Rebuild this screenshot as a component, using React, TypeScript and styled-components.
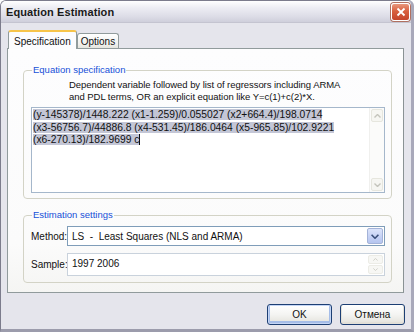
import React from "react";
import styled, { createGlobalStyle } from "styled-components";

const GlobalStyle = createGlobalStyle`
  html, body { margin: 0; padding: 0; background: #ffffff; }
  body { font-family: "Liberation Sans", Arial, sans-serif; }
  * { box-sizing: border-box; }
`;

const Window = styled.div`
  width: 414px;
  height: 332px;
  display: flex;
  flex-direction: column;
  background: #e5e5ec;
  border: 1px solid #7c7c8c;
  border-right: 3px solid #a9a9ba;
  border-bottom: 3px solid #9c9cac;
  border-radius: 6px 6px 0 0;
  overflow: hidden;
`;

const TitleBar = styled.div`
  height: 22px;
  flex: none;
  display: flex;
  align-items: center;
  justify-content: space-between;
  padding: 0 1px 0 5px;
  background: linear-gradient(180deg, #ffffff 0%, #eeeef4 30%, #dcdce6 75%, #cfcfdb 100%);
  border-bottom: 1px solid #c4c4d0;
`;

const Title = styled.span`
  font-family: "Liberation Sans", Arial, sans-serif;
  font-weight: bold;
  font-size: 11px;
  color: #1a1a1a;
  letter-spacing: 0.1px;
`;

const CloseButton = styled.div`
  width: 19px;
  height: 18px;
  border: 1px solid #ffffff;
  border-radius: 3px;
  background: linear-gradient(180deg, #e8977c 0%, #d8603f 45%, #c4442a 100%);
  box-shadow: 0 0 0 1px #b07060;
  display: flex;
  align-items: center;
  justify-content: center;
`;

const Body = styled.div`
  flex: 1;
  display: flex;
  flex-direction: column;
  padding: 7px 0 0 6px;
`;

const TabRow = styled.div`
  display: flex;
  align-items: flex-end;
  height: 18px;
  padding-left: 1px;
  position: relative;
  z-index: 1;
`;

const Tab = styled.div<{ $active?: boolean }>`
  font-size: 10px;
  color: #111;
  display: flex;
  align-items: center;
  justify-content: center;
  border: 1px solid #919b9c;
  border-bottom: none;
  border-radius: 3px 3px 0 0;
  height: ${(p) => (p.$active ? "19px" : "15px")};
  padding: ${(p) => (p.$active ? "2px 5px 0" : "0 3px")};
  margin-bottom: ${(p) => (p.$active ? "-1px" : "0")};
  background: ${(p) =>
    p.$active ? "#fcfcfe" : "linear-gradient(180deg, #ffffff 0%, #f1f1ee 70%, #e4e4de 100%)"};
  border-top: ${(p) => (p.$active ? "2px solid #f7c44a" : "1px solid #919b9c")};
`;

const Panel = styled.div`
  width: 397px;
  height: 245px;
  background: linear-gradient(180deg, #fdfdfe 0%, #fbfbfb 80%, #f5f5f3 100%);
  border: 1px solid #919b9c;
  border-right: 1px solid #8a9294;
  display: flex;
  flex-direction: column;
  padding: 15px 11px 0 15px;
  gap: 10px;
`;

const Group = styled.fieldset`
  margin: 0;
  border: 1px solid #d3d3c6;
  border-radius: 4px;
  padding: 0 6px 0 7px;
  display: flex;
  flex-direction: column;
`;

const Legend = styled.legend`
  font-size: 9.5px;
  color: #1750d8;
  padding: 0 1px;
  margin-left: 1px;
  line-height: 12px;
`;

const Description = styled.div`
  font-size: 9.5px;
  letter-spacing: -0.05px;
  color: #111;
  line-height: 12px;
  padding: 3px 0 0 38px;
`;

const EditBox = styled.div`
  margin-top: 4px;
  height: 86px;
  border: 1px solid #a5b7cb;
  background: #ffffff;
  display: flex;
`;

const EditText = styled.div`
  flex: 1;
  font-size: 10.3px;
  line-height: 12.5px;
  color: #111;
  padding: 1px 1px;
`;

const Line = styled.div``;

const Sel = styled.span`
  background: #c3c6d6;
`;

const Caret = styled.span`
  display: inline-block;
  width: 1px;
  height: 11px;
  background: #111;
  vertical-align: -2px;
`;

const ScrollBar = styled.div`
  width: 15px;
  display: flex;
  flex-direction: column;
  background: #fbfbfa;
  border-left: 1px solid #f0f0ee;
`;

const ScrollButton = styled.div`
  height: 13px;
  margin: 1px;
  border: 1px solid #e6e6de;
  border-radius: 2px;
  background: #f6f6f2;
  display: flex;
  align-items: center;
  justify-content: center;
`;

const Track = styled.div`
  flex: 1;
`;

const Spacer = styled.div`
  height: 5px;
`;

const GroupBody = styled.div`
  display: flex;
  flex-direction: column;
  gap: 7px;
  padding: 5px 0 6px;
`;

const FieldRow = styled.div`
  display: flex;
  align-items: center;
`;

const FieldLabel = styled.span`
  font-size: 10px;
  color: #111;
  width: 36px;
  flex: none;
`;

const Combo = styled.div`
  flex: 1;
  height: 20px;
  border: 1px solid #7f9db9;
  background: #ffffff;
  display: flex;
  align-items: center;
  padding: 1px;
`;

const ComboText = styled.span`
  flex: 1;
  font-size: 10px;
  color: #111;
  white-space: pre;
  padding-left: 3px;
`;

const DropButton = styled.div`
  width: 16px;
  height: 16px;
  border: 1px solid #a4b3d8;
  border-radius: 2px;
  background: linear-gradient(180deg, #dce4fa 0%, #c3d0f4 60%, #b5c5ef 100%);
  display: flex;
  align-items: center;
  justify-content: center;
`;

const SampleField = styled.div`
  flex: 1;
  height: 23px;
  border: 1px solid #c9d2dc;
  background: #ffffff;
  display: flex;
  align-items: stretch;
  padding: 1px;
`;

const SampleText = styled.span`
  flex: 1;
  font-size: 10px;
  color: #111;
  padding: 3px 0 0 3px;
`;

const Spinner = styled.div`
  width: 15px;
  display: flex;
  flex-direction: column;
  gap: 1px;
`;

const SpinButton = styled.div`
  flex: 1;
  border: 1px solid #ecece6;
  border-radius: 2px;
  background: #f7f7f4;
  display: flex;
  align-items: center;
  justify-content: center;
`;

const Footer = styled.div`
  display: flex;
  justify-content: flex-end;
  gap: 8px;
  padding: 11px 0 0 0;
  width: 398px;
`;

const Button = styled.button<{ $default?: boolean }>`
  width: 65px;
  height: 21px;
  font-family: "Liberation Sans", Arial, sans-serif;
  font-size: 10px;
  color: #111;
  border: 1px solid #1d3f74;
  border-radius: 3px;
  background: linear-gradient(180deg, #ffffff 0%, #f4f4f2 50%, #e6e5df 90%, #d8d4cb 100%);
  box-shadow: ${(p) =>
    p.$default ? "inset 0 0 0 1px #c4d5f5, inset 0 -1px 0 2px #a5bde8" : "inset 0 -1px 0 1px #e2e0d8"};
  padding: 0;
`;

const Chevron = ({ color, down, size = 7 }: { color: string; down?: boolean; size?: number }) => (
  <svg width={size} height={Math.round(size * 0.6)} viewBox="0 0 7 4" style={{ display: "block" }}>
    <path
      d={down ? "M0.5 0.5 L3.5 3.5 L6.5 0.5" : "M0.5 3.5 L3.5 0.5 L6.5 3.5"}
      fill="none"
      stroke={color}
      strokeWidth={1.4}
    />
  </svg>
);

export default function App() {
  return (
    <>
      <GlobalStyle />
      <Window>
        <TitleBar>
          <Title>Equation Estimation</Title>
          <CloseButton>
            <svg width="10" height="10" viewBox="0 0 10 10">
              <path d="M1.5 1.5 L8.5 8.5 M8.5 1.5 L1.5 8.5" stroke="#ffffff" strokeWidth="1.8" />
            </svg>
          </CloseButton>
        </TitleBar>
        <Body>
          <TabRow>
            <Tab $active>Specification</Tab>
            <Tab>Options</Tab>
          </TabRow>
          <Panel>
            <Group>
              <Legend>Equation specification</Legend>
              <Description>
                Dependent variable followed by list of regressors including ARMA
                <br />
                and PDL terms, OR an explicit equation like Y=c(1)+c(2)*X.
              </Description>
              <EditBox>
                <EditText>
                  <Line>
                    <Sel>(y-145378)/1448.222 (x1-1.259)/0.055027 (x2+664.4)/198.0714</Sel>
                  </Line>
                  <Line>
                    <Sel>(x3-56756.7)/44886.8 (x4-531.45)/186.0464 (x5-965.85)/102.9221</Sel>
                  </Line>
                  <Line>
                    <Sel>(x6-270.13)/182.9699 c</Sel>
                    <Caret />
                  </Line>
                </EditText>
                <ScrollBar>
                  <ScrollButton>
                    <Chevron color="#c4c4bc" />
                  </ScrollButton>
                  <Track />
                  <ScrollButton>
                    <Chevron color="#c4c4bc" down />
                  </ScrollButton>
                </ScrollBar>
              </EditBox>
              <Spacer />
            </Group>
            <Group>
              <Legend>Estimation settings</Legend>
              <GroupBody>
                <FieldRow>
                  <FieldLabel>Method:</FieldLabel>
                  <Combo>
                    <ComboText>LS  -  Least Squares (NLS and ARMA)</ComboText>
                    <DropButton>
                      <Chevron color="#3a4f7a" down size={8} />
                    </DropButton>
                  </Combo>
                </FieldRow>
                <FieldRow>
                  <FieldLabel>Sample:</FieldLabel>
                  <SampleField>
                    <SampleText>1997 2006</SampleText>
                    <Spinner>
                      <SpinButton>
                        <Chevron color="#d0d0c8" size={5} />
                      </SpinButton>
                      <SpinButton>
                        <Chevron color="#d0d0c8" down size={5} />
                      </SpinButton>
                    </Spinner>
                  </SampleField>
                </FieldRow>
              </GroupBody>
            </Group>
          </Panel>
          <Footer>
            <Button $default>OK</Button>
            <Button>Отмена</Button>
          </Footer>
        </Body>
      </Window>
    </>
  );
}
